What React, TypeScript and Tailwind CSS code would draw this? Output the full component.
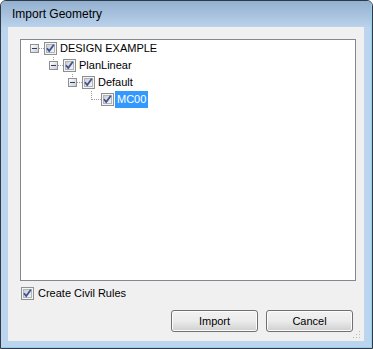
import React from "react";

const font = { fontFamily: '"Liberation Sans", Arial, sans-serif' };

function Check() {
  return (
    <svg width="13" height="13" viewBox="0 0 13 13" className="shrink-0">
      <defs>
        <linearGradient id="cbg" x1="0" y1="0" x2="1" y2="1">
          <stop offset="0" stopColor="#c9ccd1" />
          <stop offset="1" stopColor="#f7f7f7" />
        </linearGradient>
      </defs>
      <rect x="0.5" y="0.5" width="12" height="12" fill="#f4f4f4" stroke="#8e8f8f" />
      <rect x="2.5" y="2.5" width="8" height="8" fill="url(#cbg)" stroke="#b0b3b8" />
      <path d="M3 6.2 L5.2 9 L9.8 2.8" fill="none" stroke="#3e5290" strokeWidth="1.8" />
    </svg>
  );
}

function Connector({ first, expander }: { first: boolean; expander: boolean }) {
  // cell 19 wide, 17 high; center x = 9, y = 8
  const dots: React.ReactElement[] = [];
  if (!first) {
    for (let y = 0; y <= 8; y += 2) dots.push(<rect key={"v" + y} x={9} y={y} width={1} height={1} fill="#a0a0a0" />);
  }
  for (let x = 10; x < 19; x += 2) dots.push(<rect key={"h" + x} x={x} y={8} width={1} height={1} fill="#a0a0a0" />);
  return (
    <svg width="19" height="17" viewBox="0 0 19 17" className="shrink-0">
      {dots}
      {expander && (
        <g>
          <rect x="5.5" y="4.5" width="8" height="8" fill="#ffffff" stroke="#919191" />
          <rect x="6" y="5" width="7" height="7" fill="url(#expg)" />
          <rect x="7" y="8" width="5" height="1" fill="#2c3e6a" />
        </g>
      )}
    </svg>
  );
}

function Row({ level, label, expander, first, selected }: { level: number; label: string; expander: boolean; first: boolean; selected?: boolean }) {
  return (
    <div className="flex items-center h-[17px]" style={{ paddingLeft: level * 19 }}>
      <Connector first={first} expander={expander} />
      <Check />
      <span
        className={
          "ml-[1px] px-[2px] h-[17px] leading-[17px] text-[11px] " +
          (selected ? "bg-[#3399ff] text-white" : "text-black")
        }
      >
        {label}
      </span>
    </div>
  );
}

function Button({ label }: { label: string }) {
  return (
    <div className="w-[87px] h-[22px] rounded-[3px] border border-[#707070] bg-gradient-to-b from-[#f2f2f2] via-[#ebebeb] to-[#cfcfcf] flex items-center justify-center text-[11px] text-black shadow-[inset_0_0_0_1px_#fcfcfc]">
      {label}
    </div>
  );
}

export default function App() {
  return (
    <div className="w-[373px] h-[349px] bg-white" style={font}>
      <svg width="0" height="0" className="absolute">
        <defs>
          <linearGradient id="expg" x1="0" y1="0" x2="1" y2="1">
            <stop offset="0" stopColor="#ffffff" />
            <stop offset="1" stopColor="#c8ccd4" />
          </linearGradient>
        </defs>
      </svg>
      <div className="w-full h-full border border-[#2e3a46] rounded-t-[6px] bg-[#bcd5ee] flex flex-col overflow-hidden">
        <div className="w-full h-full border-r border-b border-[#8ed2ee] flex flex-col">
          <div className="h-[26px] shrink-0 bg-gradient-to-b from-[#93b0cf] to-[#bad2eb] flex items-center pl-[11px] text-[12px] text-black">
            Import Geometry
          </div>
          <div className="flex-1 px-[7px] pb-[6px] flex flex-col">
            <div className="flex-1 bg-[#f0f0f0] flex flex-col pt-[12px] pl-[12px] pr-[8px] pb-[9px]">
              <div className="h-[242px] border border-[#828790] bg-white pt-[0px] pl-[4px]">
                <Row level={0} label="DESIGN EXAMPLE" expander first />
                <Row level={1} label="PlanLinear" expander first={false} />
                <Row level={2} label="Default" expander first={false} />
                <Row level={3} label="MC00" expander={false} first={false} selected />
              </div>
              <div className="flex items-center mt-[6px] pl-[1px] h-[13px]">
                <Check />
                <span className="ml-[4px] text-[11px] text-black">Create Civil Rules</span>
              </div>
              <div className="flex-1 flex items-end justify-end gap-[8px] pr-[3px] relative">
                <Button label="Import" />
                <Button label="Cancel" />
                <svg width="9" height="9" viewBox="0 0 9 9" className="absolute right-[-5px] bottom-[-7px]">
                  <rect x="7" y="1" width="1" height="1" fill="#b8b8b8" />
                  <rect x="4" y="4" width="1" height="1" fill="#b8b8b8" />
                  <rect x="7" y="4" width="1" height="1" fill="#b8b8b8" />
                  <rect x="1" y="7" width="1" height="1" fill="#b8b8b8" />
                  <rect x="4" y="7" width="1" height="1" fill="#b8b8b8" />
                  <rect x="7" y="7" width="1" height="1" fill="#b8b8b8" />
                </svg>
              </div>
            </div>
          </div>
        </div>
      </div>
    </div>
  );
}
